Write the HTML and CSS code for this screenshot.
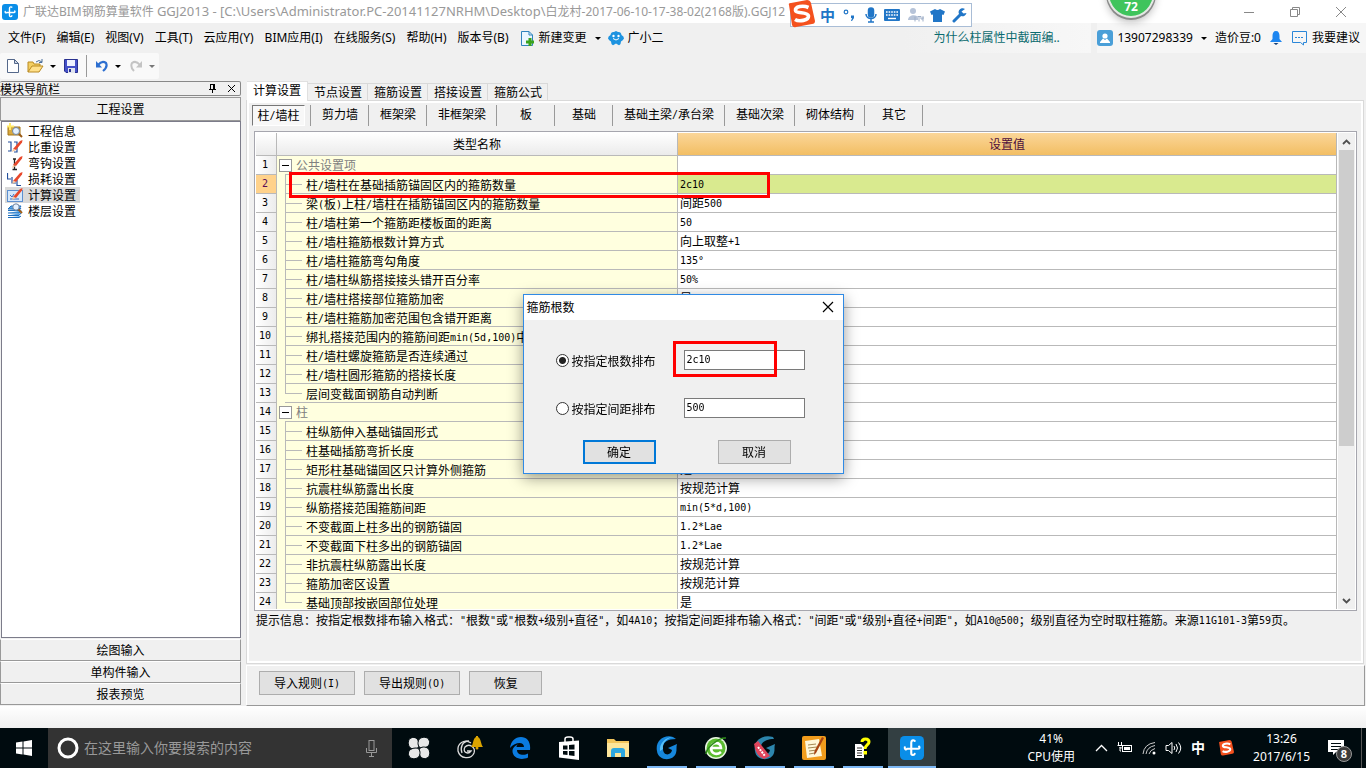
FILE: index.html
```html
<!DOCTYPE html>
<html lang="zh-CN">
<head>
<meta charset="utf-8">
<title>广联达BIM钢筋算量软件 GGJ2013</title>
<link rel="stylesheet" href="styles.css">
</head>
<body>
<svg class="defs" aria-hidden="true">
  <symbol id="anchor" viewBox="0 0 16 16"><rect width="16" height="16" rx="3" fill="#0a8ee8"/><path d="M9.800 3.200C8.600 2.400 7.500 3 7.500 4.500V11.500C7.500 13 9.500 13 9.800 11.800M3.200 7.500C3 9 4 9.200 4.800 8.500H12C13 8.500 13.300 7.800 12.700 7" fill="none" stroke="#fff" stroke-width="1.400" stroke-linecap="round"/></symbol>
  <symbol id="sogou" viewBox="0 0 28 28"><path d="M2 5Q1 3 4 3L20 0Q23 0 24 3L28 21Q28 24 25 24L9 27Q6 28 5 25Z" fill="#f4511e"/><path d="M21.500 7.500C16 5 8 6.500 8.500 10.500C9 14 21 11.500 21.500 16C21.700 20.500 12 22 8 19.500" fill="none" stroke="#fff" stroke-width="3.600"/></symbol>
  <symbol id="pencil" viewBox="0 0 16 16"><path d="M6 10L13 2L15.500 1L15 3.500L9 11Z" fill="#e8482c"/><path d="M6 10L9 11L5 13Z" fill="#f7c79b"/></symbol>
</svg>

<header class="titlebar">
  <svg class="i16"><use href="#anchor"/></svg>
  <span class="title">广联达BIM钢筋算量软件 <span class="path">GGJ2013 - [C:\Users\Administrator.PC-20141127NRHM\Desktop\</span>白龙村-2017-06-10-17-38-02(2168版).GGJ12</span>
  <div class="winbtns">
    <button aria-label="最小化"><svg width="12" height="12"><path d="M1 6.500H11" stroke="#888"/></svg></button>
    <button aria-label="还原"><svg width="12" height="12" fill="none" stroke="#888"><path d="M1.500 3.500H8.500V10.500H1.500ZM3.500 3.500V1.500H10.500V8.500H8.500"/></svg></button>
    <button aria-label="关闭"><svg width="12" height="12"><path d="M1 1L11 11M11 1L1 11" stroke="#888"/></svg></button>
  </div>
  <div class="ime">
    <svg class="ime-logo"><use href="#sogou"/></svg>
    <span>中</span>
    <svg width="16" height="16"><circle cx="4" cy="5" r="1.800" fill="none" stroke="#2176c7" stroke-width="1.200"/><path d="M9 8.500H12V11L10 14H9L10 11H9Z" fill="#2176c7"/></svg>
    <svg width="14" height="16" fill="none" stroke="#2176c7" stroke-width="1.500"><rect x="4.500" y="1" width="5" height="9" rx="2.500" fill="#2176c7"/><path d="M2 7C2 13 12 13 12 7M7 12V15M4 15H10"/></svg>
    <svg width="16" height="16"><rect y="2" width="16" height="12" rx="1" fill="#2176c7"/><path d="M2 5H14M2 8H14" stroke="#fff" stroke-width="1.600" stroke-dasharray="1.600 1"/><path d="M4 11.500H12" stroke="#fff" stroke-width="1.400"/></svg>
    <svg width="17" height="16"><circle cx="6" cy="4" r="3" fill="#b6c3d8"/><path d="M1 13C1 7 11 7 11 11V13Z" fill="#b6c3d8"/><path d="M8 9.500V14.500M10.500 9.500H14M12 9.500V14.500M14 9.500V12H16V9.500V14.500" stroke="#9fafc8" fill="none"/></svg>
    <svg width="15" height="16"><path d="M5 2Q7.500 4 10 2L15 4.500L13.500 8L12 7.500V15H3V7.500L1.500 8L0 4.500Z" fill="#2176c7"/></svg>
    <svg width="15" height="16"><path d="M2 14L9 7" stroke="#2176c7" stroke-width="3" stroke-linecap="round"/><path d="M13 2A4 4 0 1 0 14.500 6L11.500 6.500L9.500 4.500Z" fill="#2176c7"/></svg>
  </div>
  <div class="ball">72</div>
</header>

<nav class="menubar">
  <button>文件(F)</button><button>编辑(E)</button><button>视图(V)</button><button>工具(T)</button><button>云应用(Y)</button><button>BIM应用(I)</button><button>在线服务(S)</button><button>帮助(H)</button><button>版本号(B)</button>
  <button class="with-icon"><svg width="15" height="17"><path d="M1.500 1.500H9L12.500 5V15.500H1.500Z" fill="#eaf6ff" stroke="#2f83bd"/><path d="M9 1.500V5H12.500" fill="none" stroke="#2f83bd"/><path d="M10 8V16M6 12H14" stroke="#3aa31c" stroke-width="3"/></svg>新建变更<span class="caret"></span></button>
  <button class="with-icon robot"><svg width="16" height="16"><path d="M2.500 5Q3 1.500 6 2L8 1L10 2Q13 1.500 13.500 5Q16 6 16 8.500Q15 10.500 13 11.500L12.500 14Q11.500 15.500 10.500 15L8 13.500L5.500 15Q4.500 15.500 3.500 14L3 11.500Q1 10.500 0 8.500Q0 6 2.500 5Z" fill="#1d93e0"/><circle cx="5.500" cy="6" r="1.200" fill="#fff"/><circle cx="10.500" cy="6" r="1.200" fill="#fff"/><path d="M5 8.500Q8 11.500 11 8.500" stroke="#fff" fill="none"/></svg>广小二</button>
  <a class="news" href="#">为什么柱属性中截面编..</a>
  <div class="account">
    <button class="with-icon"><svg class="i16"><rect width="16" height="16" rx="3" fill="#4a9fd8"/><circle cx="8" cy="6" r="2.600" fill="#fff"/><path d="M3 12L6 8.500L8 10L10 8.500L13 12V13H3Z" fill="#fff"/></svg>13907298339<span class="caret"></span></button>
    <span>造价豆:0</span>
    <svg width="14" height="16"><path d="M7 1C9.500 1 10.500 3 10.500 6V9L13 12H1L3.500 9V6C3.500 3 4.500 1 7 1Z" fill="#1e86f0"/><path d="M4.500 13H9.500L7 15Z" fill="#123f7a"/></svg>
    <button class="with-icon"><svg width="17" height="16" fill="none" stroke="#2b87d8"><path d="M1.500 1.500H15.500V12.500H12.500V15L9.500 12.500H1.500Z"/><path d="M4 7.500H13" stroke-dasharray="2 1"/></svg>我要建议</button>
  </div>
</nav>

<div class="toolbar">
  <div class="tools">
    <button aria-label="新建"><svg width="12" height="14"><path d="M.500 .500H7.500L11.500 4.500V13.500H.500Z" fill="#fff" stroke="#55688a"/><path d="M7.500 .500V4.500H11.500Z" fill="#cfd9e8" stroke="#55688a"/></svg></button>
    <button aria-label="打开"><svg width="17" height="14"><path d="M1 13V3H6L7 5H13V8" fill="#f3cf63" stroke="#b98a22"/><path d="M1 13L5 7H16L12 13Z" fill="#ffe08a" stroke="#b98a22"/><path d="M9 3Q12 0 15 3M15 0V3.500H12" fill="none" stroke="#4b6f9b"/></svg><span class="caret"></span></button>
    <button aria-label="保存"><svg width="14" height="14"><path d="M.500 .500H13.500V13.500H2L.500 12Z" fill="#4450c8" stroke="#29318f"/><rect x="3" y="1" width="8" height="6" fill="#eef1ff"/><rect x="4" y="9" width="7" height="5" fill="#dfe3ee"/><rect x="5" y="10" width="2" height="3" fill="#29318f"/></svg></button>
    <span class="sep"></span>
    <button aria-label="撤销"><svg width="14" height="14"><path d="M3 6Q7 1 11 4Q13 8 8 12" fill="none" stroke="#2d6fd0" stroke-width="2.200"/><path d="M1 2V8.500H7Z" fill="#2d6fd0"/></svg><span class="caret"></span></button>
    <button aria-label="重做"><svg width="14" height="14"><path d="M11 6Q7 1 3 4Q1 8 5 12" fill="none" stroke="#c4c4c4" stroke-width="2"/><path d="M13 2V8.500H7Z" fill="#c4c4c4"/></svg><span class="caret dim"></span></button>
  </div>
</div>

<main class="work">
  <aside class="nav">
    <div class="nav-head"><span>模块导航栏</span>
      <button aria-label="固定"><svg width="9" height="11"><path d="M2.500 1V6M2 1.500H7M1 6.500H8M4.500 7V10" stroke="#000" fill="none"/><path d="M6 1V6" stroke="#000" stroke-width="2"/></svg></button>
      <button aria-label="关闭"><svg width="9" height="9"><path d="M1 1L8 8M8 1L1 8" stroke="#000"/></svg></button></div>
    <button class="group">工程设置</button>
    <ul class="tree">
      <li><svg class="i16"><path d="M1 4H13V12H1Z" fill="#d8a940" stroke="#a47517"/><path d="M3 0V7M0 3.500H7" stroke="#ffe96b" stroke-width="2"/><circle cx="9" cy="8" r="3.500" fill="#e3f1ff" stroke="#71839c"/><path d="M12 11L15 14" stroke="#9a5b16" stroke-width="2"/></svg><span>工程信息</span></li>
      <li><svg class="i16"><path d="M1 3H4V12H1M7 3H10V13H7" fill="none" stroke="#244f9c" stroke-width="1.200"/><use href="#pencil"/></svg><span>比重设置</span></li>
      <li><svg class="i16"><path d="M6 4H9M7.500 4V14M5.500 14.500H10" fill="none" stroke="#222" stroke-width="1.300"/><use href="#pencil"/></svg><span>弯钩设置</span></li>
      <li><svg class="i16"><path d="M.500 2V8H4M5 6V12H9M10 9V14.500H14" fill="none" stroke="#244f9c" stroke-width="1.200"/><use href="#pencil"/></svg><span>损耗设置</span></li>
      <li class="on"><svg class="i16"><rect x=".500" y="3.500" width="15" height="11" fill="#d6e8fb" stroke="#5c8fd0"/><path d="M3 8L5 10L7 7M3 12H12" stroke="#3d6fc0" fill="none"/><use href="#pencil"/></svg><span>计算设置</span></li>
      <li><svg class="i16"><path d="M1 6L4 3H14L12 6ZM1 7.500H12L14 5M1 10H12L14 7.500M1 12.500H12L14 10M1 14.500H12L14 13" fill="#59a7e8" stroke="#1e6fbe"/><circle cx="9" cy="4" r="3.200" fill="#e3f1ff" stroke="#71839c"/><path d="M11.500 6.500L15 10" stroke="#9a5b16" stroke-width="2"/></svg><span>楼层设置</span></li>
    </ul>
    <button class="group">绘图输入</button>
    <button class="group">单构件输入</button>
    <button class="group">报表预览</button>
  </aside>

  <section class="content">
    <div class="tabs"><button class="on">计算设置</button><button>节点设置</button><button>箍筋设置</button><button>搭接设置</button><button>箍筋公式</button></div>
    <div class="panel">
      <div class="subtabs"><button class="on">柱<span class="m">/</span>墙柱</button><button>剪力墙</button><button>框架梁</button><button>非框架梁</button><button>板</button><button>基础</button><button>基础主梁<span class="m">/</span>承台梁</button><button>基础次梁</button><button>砌体结构</button><button>其它</button></div>
      <div class="gridbox">
        <div class="scrollarea">
          <table>
            <colgroup><col class="c-no"><col class="c-name"><col></colgroup>
            <thead><tr><th></th><th>类型名称</th><th class="sel">设置值</th></tr></thead>
            <tbody>
              <tr class="grp"><th>1</th><td><button class="fold" aria-label="折叠"></button>公共设置项</td><td></td></tr>
              <tr class="sel"><th>2</th><td>柱<span class="m">/</span>墙柱在基础插筋锚固区内的箍筋数量</td><td><span class="m">2c10</span></td></tr>
              <tr><th>3</th><td>梁<span class="m">(</span>板<span class="m">)</span>上柱<span class="m">/</span>墙柱在插筋锚固区内的箍筋数量</td><td>间距<span class="m">500</span></td></tr>
              <tr><th>4</th><td>柱<span class="m">/</span>墙柱第一个箍筋距楼板面的距离</td><td><span class="m">50</span></td></tr>
              <tr><th>5</th><td>柱<span class="m">/</span>墙柱箍筋根数计算方式</td><td>向上取整<span class="m">+1</span></td></tr>
              <tr><th>6</th><td>柱<span class="m">/</span>墙柱箍筋弯勾角度</td><td><span class="m">135°</span></td></tr>
              <tr><th>7</th><td>柱<span class="m">/</span>墙柱纵筋搭接接头错开百分率</td><td><span class="m">50%</span></td></tr>
              <tr><th>8</th><td>柱<span class="m">/</span>墙柱搭接部位箍筋加密</td><td>是</td></tr>
              <tr><th>9</th><td>柱<span class="m">/</span>墙柱箍筋加密范围包含错开距离</td><td></td></tr>
              <tr><th>10</th><td>绑扎搭接范围内的箍筋间距<span class="m">min(5d,100)</span>中</td><td></td></tr>
              <tr><th>11</th><td>柱<span class="m">/</span>墙柱螺旋箍筋是否连续通过</td><td></td></tr>
              <tr><th>12</th><td>柱<span class="m">/</span>墙柱圆形箍筋的搭接长度</td><td></td></tr>
              <tr class="last"><th>13</th><td>层间变截面钢筋自动判断</td><td></td></tr>
              <tr class="grp"><th>14</th><td><button class="fold" aria-label="折叠"></button>柱</td><td></td></tr>
              <tr><th>15</th><td>柱纵筋伸入基础锚固形式</td><td></td></tr>
              <tr><th>16</th><td>柱基础插筋弯折长度</td><td></td></tr>
              <tr><th>17</th><td>矩形柱基础锚固区只计算外侧箍筋</td><td>是</td></tr>
              <tr><th>18</th><td>抗震柱纵筋露出长度</td><td>按规范计算</td></tr>
              <tr><th>19</th><td>纵筋搭接范围箍筋间距</td><td><span class="m">min(5*d,100)</span></td></tr>
              <tr><th>20</th><td>不变截面上柱多出的钢筋锚固</td><td><span class="m">1.2*Lae</span></td></tr>
              <tr><th>21</th><td>不变截面下柱多出的钢筋锚固</td><td><span class="m">1.2*Lae</span></td></tr>
              <tr><th>22</th><td>非抗震柱纵筋露出长度</td><td>按规范计算</td></tr>
              <tr><th>23</th><td>箍筋加密区设置</td><td>按规范计算</td></tr>
              <tr class="last"><th>24</th><td>基础顶部按嵌固部位处理</td><td>是</td></tr>
            </tbody>
          </table>
        </div>
        <div class="scrollbar">
          <button aria-label="向上滚动"><svg width="9" height="6"><path d="M1 5L4.500 1.500L8 5" fill="none" stroke="#505050" stroke-width="1.800"/></svg></button>
          <div class="track"><div class="thumb"></div></div>
          <button aria-label="向下滚动"><svg width="9" height="6"><path d="M1 1L4.500 4.500L8 1" fill="none" stroke="#505050" stroke-width="1.800"/></svg></button>
        </div>
        <div class="mark mark-row"></div>
      </div>
      <p class="hint">提示信息：按指定根数排布输入格式：<span class="m">"</span>根数<span class="m">"</span>或<span class="m">"</span>根数<span class="m">+</span>级别<span class="m">+</span>直径<span class="m">"</span>，如<span class="m">4A10</span>；按指定间距排布输入格式：<span class="m">"</span>间距<span class="m">"</span>或<span class="m">"</span>级别<span class="m">+</span>直径<span class="m">+</span>间距<span class="m">"</span>，如<span class="m">A10@500</span>；级别直径为空时取柱箍筋。来源<span class="m">11G101-3</span>第<span class="m">59</span>页。</p>
    </div>
    <div class="actions"><button class="btn">导入规则<span class="m">(I)</span></button><button class="btn">导出规则<span class="m">(O)</span></button><button class="btn">恢复</button></div>
  </section>
</main>
<div class="status"></div>

<form class="dialog">
  <div class="dialog-head"><span>箍筋根数</span><button type="button" aria-label="关闭"><svg width="12" height="12"><path d="M1 1L11 11M11 1L1 11" stroke="#000" stroke-width="1.200"/></svg></button></div>
  <div class="dialog-body">
    <div class="field"><input type="radio" name="mode" id="by-count" checked><label for="by-count">按指定根数排布</label><input type="text" class="m" aria-label="根数" value="2c10"><div class="mark mark-field"></div></div>
    <div class="field"><input type="radio" name="mode" id="by-gap"><label for="by-gap">按指定间距排布</label><input type="text" class="m" aria-label="间距" value="500"></div>
    <div class="dialog-actions"><button type="button" class="btn primary">确定</button><button type="button" class="btn">取消</button></div>
  </div>
</form>

<footer class="taskbar">
  <button class="start" aria-label="开始"><svg width="16" height="16" fill="#fff"><path d="M0 2.500L6.500 1.500V7.500H0ZM7.500 1.400L16 0V7.500H7.500ZM0 8.500H6.500V14.500L0 13.500ZM7.500 8.500H16V16L7.500 14.600Z"/></svg></button>
  <label class="search"><svg width="22" height="22"><circle cx="11" cy="11" r="9" fill="none" stroke="#fff" stroke-width="3"/></svg><input type="text" placeholder="在这里输入你要搜索的内容" aria-label="搜索"><svg width="13" height="17" fill="none" stroke="#999"><rect x="4" y=".500" width="5" height="10"/><path d="M1.500 8V12.500H11.500V8M6.500 13V16M4 16.500H9"/></svg></label>
  <div class="apps">
    <button class="wide" aria-label="速览"><svg width="24" height="24" fill="#e8e8e8" stroke="#000b0f"><path d="M12 9C12 13 7 14 3.500 12C0 9 1 3 4 2C8 0 12 3 12 9Z"/><path d="M15 12C11 12 10 7 12 3.500C15 0 21 1 22 4C24 8 21 12 15 12Z"/><path d="M12 15C12 11 17 10 20.500 12C24 15 23 21 20 22C16 24 12 21 12 15Z"/><path d="M9 12C13 12 14 17 12 20.500C9 24 3 23 2 20C0 16 3 12 9 12Z"/></svg></button>
    <button class="wide" aria-label="提醒"><svg width="28" height="26" fill="none" stroke="#ddd" stroke-width="1.300"><path d="M15 8C8 3 1 9 2 16C4 24 15 25 18 18C20 12 13 8 9 12C6 17 12 20 15 16H11"/><path d="M13 6C6 6 4 13 6 18"/><path d="M15 12C17 11 17 3 20 2V1H22V2C25 3 25 10 27 12Z" fill="#dba400" stroke="none"/><circle cx="21" cy="13" r="1.500" fill="#dba400" stroke="none"/></svg></button>
    <button aria-label="Edge"><svg width="22" height="22"><path d="M1 11C2 4 6 0 12 0C18 0 22 5 21 13H8C8 18 15 19 19 16.500V20.500C12 24 3 21 3.500 13.500C4 10 7 8 9 7.500C8 8 7.500 9 7.500 10H15C15 4 6 5 1 11Z" fill="#0a7be0"/></svg></button>
    <button aria-label="应用商店"><svg width="22" height="24"><path d="M7 6V3Q7 1 10 1H12Q15 1 15 3V6" fill="none" stroke="#fff" stroke-width="1.500"/><path d="M1 6L21 4.500V24L1 21.500Z" fill="#fff"/><path d="M5 9.500H9.500V13.500H5ZM11 9L16.500 8.500V13.500H11ZM5 15H9.500V19L5 18.500ZM11 15H16.500V20L11 19.300Z" fill="#000b0f"/></svg></button>
    <button aria-label="文件资源管理器"><svg width="22" height="20"><path d="M0 1H7L9 3H22V19H0Z" fill="#f2c55c"/><path d="M0 5H22V19H0Z" fill="#fde59a"/><path d="M4 19V13Q4 10 7 10H15Q18 10 18 13V19H14V15H8V19Z" fill="#2da7e0"/></svg></button>
    <button class="run" aria-label="广联达"><svg width="24" height="26"><path d="M18 2C8-1 0 7 2 16C3 26 18 27 21 18C22 15 21 12 22 9L13 13L17 15C16 21 8 21 8 14C7 8 12 4 21 4Z" fill="#1687dc"/><path d="M5 16C4 9 10 2 18 2C12 3 7 8 8 14Z" fill="#5ac1f5"/></svg></button>
    <button class="run" aria-label="360浏览器"><svg width="24" height="24"><circle cx="12" cy="12" r="11" fill="#e9f7e2"/><circle cx="12" cy="12" r="9.500" fill="#5bbb30"/><path d="M17 16C12 20 7 17 7 12C7 6 17 5 17 12H7" fill="none" stroke="#fff" stroke-width="2.600"/><path d="M2 18C2 12 15 1 22 2" stroke="#2f8d1b" fill="none" stroke-width="1.500"/></svg></button>
    <button class="run" aria-label="广联达加密锁"><svg width="24" height="26"><path d="M20 2C8-1 0 7 2 16C3 26 18 27 21 18C22 15 21 12 22 9L13 13L17 15C16 21 8 21 8 14C7 8 12 4 21 4Z" fill="#2c86ad"/><path d="M1 9L5 6L17 21L11 24Q3 22 1 9Z" fill="#e0455c"/><path d="M5 12L12 21" stroke="#fff" stroke-dasharray="2 1" stroke-width="2"/></svg></button>
    <button class="run" aria-label="便笺"><svg width="24" height="24"><rect width="24" height="24" rx="2" fill="#f19c1c"/><path d="M3 5L17 3L20 20L5 22Z" fill="#fff7da"/><path d="M6 9L14 8M6 12L15 11M7 15L15 14M7 18L13 17" stroke="#a58955"/><path d="M22 2L14 17L12 19L12.500 15L20 1Z" fill="#a94412"/></svg></button>
    <button class="run" aria-label="帮助"><svg width="18" height="22"><path d="M1 7H7L10 10V21H1Z" fill="#fff"/><path d="M3 11H8M3 13.500H8M3 16H8M3 18.500H8" stroke="#333"/><path d="M8 5C8 1 15 1 15 5C15 8 11 8 11 12" fill="none" stroke="#ff0" stroke-width="3"/><rect x="9.500" y="14" width="3.500" height="3.500" fill="#ff0"/></svg></button>
    <button class="run active" aria-label="GGJ2013"><svg width="24" height="24"><use href="#anchor"/></svg></button>
  </div>
  <div class="tray">
    <div class="cpu">41%<br>CPU使用</div>
    <svg width="13" height="8"><path d="M1 7L6.500 1.500L12 7" fill="none" stroke="#fff" stroke-width="1.300"/></svg>
    <svg class="i16" fill="none" stroke="#fff"><path d="M1.500 2V5M4.500 2V5M.500 5.500H5.500V7Q3 9.500 3 7V11H4"/><rect x="5.500" y="5.500" width="9" height="6"/><path d="M7 8.500H13" stroke-width="3"/></svg>
    <svg width="14" height="14" fill="none" stroke="#ccc"><path d="M1 13Q2 3 13 1.500M4 13Q5 6 13 4.500M7 13Q8 9 13 7.500"/><circle cx="12" cy="12" r="1.500" fill="#fff" stroke="none"/></svg>
    <svg width="17" height="14" fill="none" stroke="#fff"><path d="M1 4.500H3.500L7 1.500V12.500L3.500 9.500H1Z"/><path d="M9 5Q10.500 7 9 9M11 3Q14 7 11 11M13.500 1.500Q18 7 13.500 12.500"/></svg>
    <span class="lang">中</span>
    <svg class="i16"><use href="#sogou"/></svg>
    <div class="clock">13:26<br>2017/6/15</div>
    <button class="notice" aria-label="通知"><svg width="16" height="16"><path d="M0 0H16V12H8L5 15V12H0Z" fill="#fff"/><path d="M3 3.500H13M3 6.500H13M3 9.500H10" stroke="#000b0f"/></svg><span class="count">8</span></button>
    <span class="peek"></span>
  </div>
</footer>
</body>
</html>
```
FILE: styles.css
```css
* { box-sizing: border-box; }
body {
  margin: 0;
  height: 100vh;
  display: flex;
  flex-direction: column;
  overflow: hidden;
  background: #f0f0f0;
  color: #000;
  font: 12px/16px "Noto Sans", "Noto Sans CJK SC", sans-serif;
}
button, input { font: inherit; color: inherit; }
button { margin: 0; padding: 0; border: 0; background: none; white-space: nowrap; }
svg { display: block; flex: none; }
.defs { position: absolute; width: 0; height: 0; }
.i16 { width: 16px; height: 16px; }
.m { font-family: "DejaVu Sans Mono", monospace; font-size: 10px; line-height: 1; vertical-align: 1px; }
.caret { border: 3px solid transparent; border-top-color: #000; border-bottom: 0; margin-left: 3px; }
.caret.dim { border-top-color: #777; }
.with-icon { display: flex; align-items: center; gap: 4px; }

.titlebar { position: relative; flex: none; height: 23px; display: flex; align-items: center; gap: 5px; padding-left: 2px; background: #fff; }
.title { flex: 1; color: #999; white-space: nowrap; }
.path { font-size: 13px; line-height: 1; }
.winbtns { display: flex; gap: 34px; padding-right: 19px; }
.ime {
  position: absolute; left: 790px; top: 3px; height: 24px; width: 182px; z-index: 3;
  display: flex; align-items: center; justify-content: space-between; padding: 0 4px 0 29px;
  background: #fff; border: 1px solid #a9bdd6; color: #2176c7; font-size: 15px; font-weight: 700;
}
.ime-logo { position: absolute; left: -4px; top: -4px; width: 28px; height: 28px; }
.ball {
  position: absolute; left: 1107px; top: -32px; width: 48px; height: 50px; padding-top: 29px; z-index: 3;
  border-radius: 50%; border: 2px solid #e4e9e4; background: #3fc45c; color: #fff; text-align: center; font-weight: 700;
  box-shadow: 0 1px 0 1px #8a8a8a, 0 4px 8px #bbb;
}

.menubar { flex: none; height: 30px; display: flex; align-items: center; gap: 11px; padding-left: 8px; }
.menubar .robot { margin-left: -4px; }
.menubar .caret { margin-left: 4px; }
.news { align-self: stretch; display: flex; align-items: center; margin-left: auto; width: 187px; padding-left: 29px; background: linear-gradient(90deg, #f0f0f0, #f7f7f7); color: #0b6b6f; text-decoration: none; }
.account { align-self: stretch; display: flex; align-items: center; gap: 8px; margin-left: -5px; padding: 0 6px 0 0; background: #f6f6f6; }

.toolbar { flex: none; height: 27px; }
.tools { display: inline-flex; align-items: center; gap: 8px; height: 26px; padding: 0 4px 0 7px; background: #f9f9f9; border-radius: 2px; }
.tools button { display: flex; align-items: center; gap: 3px; }
.tools .sep { width: 1px; height: 22px; background: #999; }

.work { flex: 1; min-height: 0; display: flex; gap: 4px; font-family: "Noto Sans CJK SC", sans-serif; }
.nav { width: 242px; flex: none; display: flex; flex-direction: column; padding: 1px 1px 1px 0; }
.nav-head { display: flex; align-items: center; gap: 10px; height: 15px; padding-right: 4px; border: 1px solid #888; border-left: 0; border-radius: 2px; margin-bottom: 1px; }
.nav-head span { flex: 1; line-height: 13px; }
.group { flex: none; height: 22px; border: 1px solid #999; border-top-color: #fff; }
.nav-head + .group { height: 24px; border-top-color: #999; }
.tree { flex: 1; min-height: 0; margin: 0 0 1px 1px; padding: 1px 3px; list-style: none; background: #fff; border: 1px solid #7c7c8a; }
.tree li { display: flex; gap: 4px; width: max-content; height: 16px; padding-left: 2px; }
.tree span { padding: 0 4px 0 1px; }
.tree .on { background: #d9d9d9; }

.content { flex: 1; min-width: 0; display: flex; flex-direction: column; padding: 1px 1px 0 0; }
.tabs { display: flex; align-items: flex-end; flex: none; height: 19px; padding-left: 1px; }
.tabs button { height: 17px; padding: 0 5px 0 6px; border: 1px solid #d9d9d9; border-width: 1px 1px 0 0; }
.tabs .on { position: relative; height: 20px; padding: 0 6px 3px; margin-bottom: -1px; background: #fff; border-color: #e0e0e0; }
.panel { flex: 1; min-height: 0; display: flex; flex-direction: column; border: 1px solid #d9d9d9; outline: 2px solid #fff; outline-offset: -3px; padding: 4px 6px 2px 7px; margin-right: 1px; }
.subtabs { display: flex; height: 21px; margin-bottom: 5px; }
.subtabs button { min-width: 58px; padding: 0 10px 3px 11px; border-right: 1px solid #999; }
.subtabs .on { position: relative; margin: 0 5px 0 -2px; padding: 0 4px 1px; min-width: 53px; border: 1px solid #999; border-color: #777 #fff #fff #777; background: #f8f8f8; }
.subtabs .on + button { border-left: 1px solid #999; width: 59px; }

.gridbox { position: relative; flex: 1; min-height: 0; display: flex; gap: 1px; border: 1px solid #a6a6ae; padding: 1px; background: #fff; }
.scrollarea { flex: 1; min-width: 0; overflow: hidden; border-right: 1px solid #b8b8b8; }
table { width: 100%; table-layout: fixed; border-collapse: separate; border-spacing: 0; }
.c-no { width: 21px; }
.c-name { width: 401px; }
th, td { height: 19px; padding: 0; font-weight: 400; line-height: 18px; white-space: nowrap; overflow: hidden; border-right: 1px solid #b9b9b9; border-bottom: 1px solid #b9b9b9; }
th:last-child, td:last-child { border-right: 0; }
thead th { height: 23px; background: linear-gradient(#fff, #ebebeb); }
thead .sel { background: linear-gradient(#fbd699, #f2be63); color: #4d0d3d; }
tbody th { background: linear-gradient(90deg, #fff, #ececec); font: 10px/18px "DejaVu Sans Mono", monospace; padding-right: 2px; }
tbody td { text-align: left; padding-left: 2px; }
tbody td:nth-child(2) {
  border-bottom: 0; padding-left: 29px;
  background:
    linear-gradient(#b9b9b9, #b9b9b9) 8px 0 / 1px 19px no-repeat,
    linear-gradient(#b9b9b9, #b9b9b9) 8px 9px / 17px 1px no-repeat,
    linear-gradient(#b9b9b9, #b9b9b9) 8px 18px / 400px 1px no-repeat,
    #ffffdf;
}
tbody .last td:nth-child(2) { background-size: 1px 9px, 17px 1px, 400px 1px; }
tbody .grp td:nth-child(2) { padding-left: 2px; color: #808080; background-size: 0 0, 0 0, 400px 1px; }
tbody .sel th { background: #ffd28b; color: #5a0d57; }
tbody .sel td:last-child { background: #d9ea8f; }
.fold { width: 13px; height: 13px; margin: 0 4px 2px 0; vertical-align: middle; border: 1px solid #999; background: linear-gradient(#000, #000) 2px 5px / 7px 1px no-repeat #fff; }
.grp td { line-height: 16px; }
.scrollbar { width: 17px; display: flex; flex-direction: column; background: #f0f0f0; }
.scrollbar button { height: 17px; display: grid; place-items: center; }
.track { flex: 1; padding: 0 1px; }
.thumb { height: 67%; background: #cdcdcd; }
.mark { position: absolute; border: 3px solid #f00; pointer-events: none; }
.mark-row { left: 34px; top: 40px; width: 481px; height: 26px; }
.hint { flex: none; margin: 0; padding: 1px 0 0 2px; height: 50px; white-space: nowrap; }
.actions { flex: none; display: flex; gap: 9px; height: 41px; margin-top: 1px; padding: 5px 12px 0; border: 1px solid #999; border-color: #fff #999 #999 #fff; }
.btn { min-width: 73px; height: 24px; padding: 0 14px; background: #e1e1e1; border: 1px solid #adadad; }
.status { flex: none; height: 22px; background: linear-gradient(#fff, #f0f0f0); }

.dialog { position: fixed; inset: 0; margin: auto; width: 321px; height: 180px; z-index: 5; display: flex; flex-direction: column; background: #f0f0f0; border: 1px solid #2f8ae5; box-shadow: 0 4px 14px rgba(0, 0, 0, .4); font-family: "Noto Sans CJK SC", sans-serif; }
.dialog-head { display: flex; justify-content: space-between; align-items: center; height: 25px; padding: 0 9px 1px 3px; background: #fff; }
.dialog-body { padding: 30px 38px 0 32px; }
.field { position: relative; display: flex; align-items: center; height: 20px; margin-bottom: 28px; }
.field label { margin-right: auto; padding: 2px 0 0 3px; }
.field input[type="radio"] { appearance: none; width: 13px; height: 13px; margin: 0; border: 1px solid #333; border-radius: 50%; background: #fff; }
.field input[type="radio"]:checked { background: radial-gradient(circle, #222 3px, #fff 4px); }
.field input[type="text"] { width: 121px; height: 20px; padding: 0 2px 1px; border: 1px solid #7a7a7a; border-radius: 0; background: #fff; }
.mark-field { left: 117px; top: -9px; width: 104px; height: 36px; }
.dialog-actions { display: flex; justify-content: space-between; padding: 0 14px 0 27px; margin-top: -6px; }
.primary { border: 2px solid #0078d7; }

.taskbar { flex: none; height: 40px; display: flex; background: #000b0f; color: #fff; }
.start { width: 48px; display: grid; place-items: center; }
.search { width: 344px; display: flex; align-items: center; gap: 5px; padding: 0 14px 0 9px; background: #333; }
.search input { flex: 1; min-width: 0; padding: 0; border: 0; background: none; outline: 0; font-size: 14px; }
.search input::placeholder { color: #999; opacity: 1; }
.apps { display: flex; margin-left: 2px; gap: 1px; }
.apps button { width: 48px; display: grid; place-items: center; background: linear-gradient(#7db8f5, #7db8f5) 4px 38px / 0 2px no-repeat; }
.apps .wide { width: 50px; }
.apps .run { background-size: 40px 2px; }
.apps .active { background-color: #333f42; background-position: 0 38px; background-size: 48px 2px; }
.tray { margin-left: auto; display: flex; align-items: center; gap: 9px; padding-right: 4px; }
.cpu, .clock { text-align: center; line-height: 18px; }
.cpu { margin-right: 11px; }
.clock { margin: 0 9px 0 10px; }
.lang { margin-right: 4px; font-size: 14px; font-weight: 700; }
.notice { position: relative; width: 24px; height: 20px; margin-right: 2px; }
.notice + .peek { margin-left: -2px; }
.count { position: absolute; right: 0; bottom: -4px; width: 16px; height: 16px; border-radius: 50%; background: #3b3b3b; border: 1px solid #999; font-size: 11px; font-weight: 700; line-height: 14px; }
.peek { align-self: stretch; width: 1px; background: #555; }
```
